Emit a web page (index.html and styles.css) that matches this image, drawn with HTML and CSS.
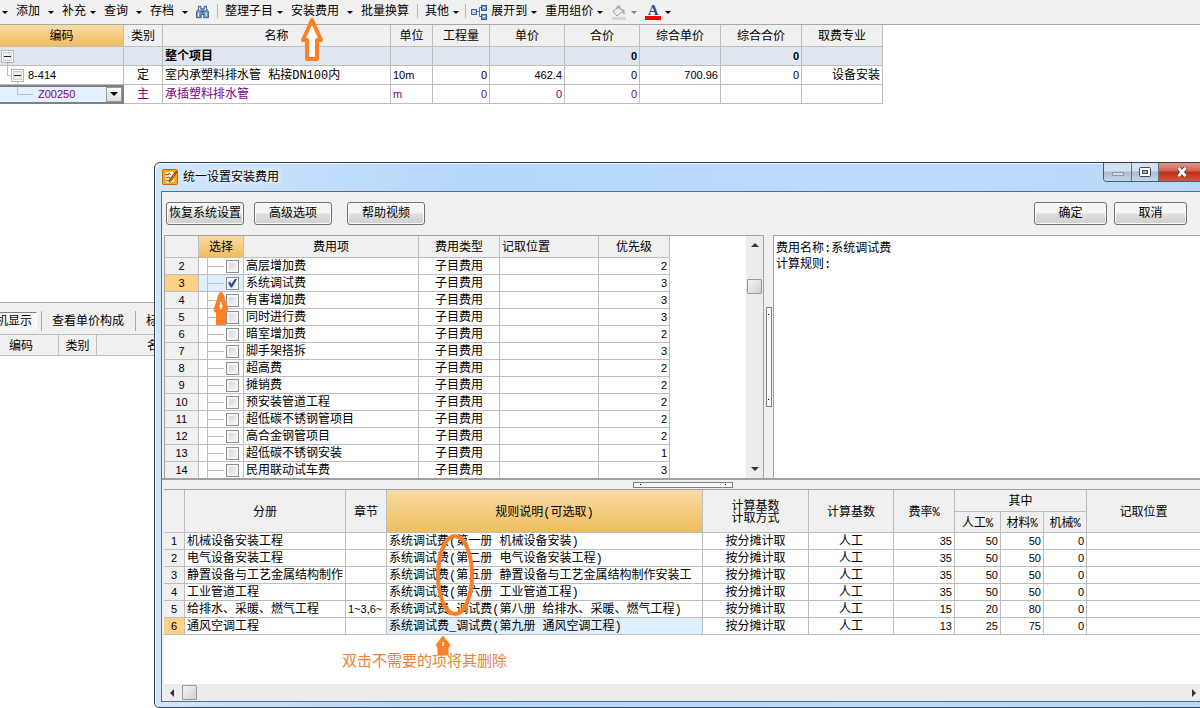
FILE: index.html
```html
<!DOCTYPE html>
<html lang="zh-CN">
<head>
<meta charset="utf-8">
<title>统一设置安装费用</title>
<link rel="stylesheet" href="styles.css">
</head>
<body>
<svg class="defs" aria-hidden="true">
  <symbol id="caret" viewBox="0 0 6 3"><path d="M0 0h6L3 3z"/></symbol>
  <symbol id="minus" viewBox="0 0 13 13"><rect x=".5" y=".5" width="12" height="12" fill="#fff" stroke="#b4b4b4"/><rect x="2.5" y="2.5" width="8" height="8" fill="#ececec" stroke="#d0d0d0"/><path d="M3 6.500h7" stroke="#222"/></symbol>
</svg>
<div class="app">
  <nav class="toolbar" aria-label="工具栏">
    <button class="tool" aria-label="更多"><svg class="caret"><use href="#caret"/></svg></button>
    <button class="tool split">添加<svg class="caret"><use href="#caret"/></svg></button>
    <button class="tool">补充<svg class="caret"><use href="#caret"/></svg></button>
    <button class="tool split">查询<svg class="caret"><use href="#caret"/></svg></button>
    <button class="tool split">存档<svg class="caret"><use href="#caret"/></svg></button>
    <button class="tool" aria-label="查找"><svg class="find" viewBox="0 0 16 16"><path d="M3 1h3v3h4V1h3v3l2.500 4v7h-6v-4h-3v4h-6V8L3 4z" fill="#6f93c6" stroke="#2b4c85"/><path d="M3 8.500v5M12.500 8.500v5M4.500 2.500v3M11.500 2.500v3" stroke="#e6f0fb" stroke-width="1.400"/><path d="M6 7.500h4" stroke="#1f3c70"/></svg></button>
    <span class="sep"></span>
    <button class="tool">整理子目<svg class="caret"><use href="#caret"/></svg></button>
    <button class="tool split">安装费用<svg class="caret"><use href="#caret"/></svg></button>
    <button class="tool">批量换算</button>
    <span class="sep"></span>
    <button class="tool">其他<svg class="caret"><use href="#caret"/></svg></button>
    <span class="sep tight"></span>
    <button class="tool"><svg class="icon" viewBox="0 0 16 16"><path d="M5 7.500h3.500M8.500 3.500v9M8.500 3.500H11M8.500 12.500H11" fill="none" stroke="#4a6fb0"/><rect x=".5" y="5.500" width="5" height="5" fill="#a9c6ee" stroke="#3c66ad"/><rect x="10.500" y="1.500" width="5" height="5" fill="#78a5e6" stroke="#2f5aa5"/><rect x="10.500" y="10.500" width="5" height="5" fill="#78a5e6" stroke="#2f5aa5"/><path d="M12 3.500h2M12 12.500h2M2 7.500h2" stroke="#fff"/></svg>展开到<svg class="caret"><use href="#caret"/></svg></button>
    <button class="tool">重用组价<svg class="caret"><use href="#caret"/></svg></button>
    <button class="tool disabled" aria-label="填充颜色"><svg class="icon" viewBox="0 0 16 16"><path d="M2 7l6-4 4 4-6 5z" fill="#eee" stroke="#9a9a9a"/><path d="M6 5V2.500a2 2 0 0 1 3 0V6" fill="none" stroke="#9a9a9a"/><path d="M11 5c3 0 3 3 2.500 6-1.500-1-2-3-2.500-4z" fill="#aaa"/><rect x="1" y="13" width="14" height="3" fill="#d6d6d6"/></svg><svg class="caret"><use href="#caret"/></svg></button>
    <button class="tool" aria-label="字体颜色"><span class="font-color">A</span><svg class="caret"><use href="#caret"/></svg></button>
  </nav>

  <main class="budget">
    <table class="grid main-grid">
      <colgroup><col class="w124"><col class="w39"><col class="w228"><col class="w42"><col class="w57"><col class="w75"><col class="w75"><col class="w81"><col class="w81"><col class="w81"></colgroup>
      <thead><tr><th class="hot">编码</th><th>类别</th><th>名称</th><th>单位</th><th>工程量</th><th>单价</th><th>合价</th><th>综合单价</th><th>综合合价</th><th>取费专业</th></tr></thead>
      <tbody>
        <tr class="total"><td class="tree"><svg class="tree-art" viewBox="0 0 34 18"><use href="#minus" x="1" y="3" width="13" height="13"/><path d="M7.500 16v2"/></svg></td><td></td><td>整个项目</td><td></td><td></td><td></td><td class="num">0</td><td></td><td class="num">0</td><td></td></tr>
        <tr><td class="tree"><svg class="tree-art" viewBox="0 0 34 18"><path d="M7.500 0v9.500H11M17.500 15v3"/><use href="#minus" x="11" y="3" width="13" height="13"/></svg><span class="code">8-414</span></td><td class="mid">定</td><td>室内承塑料排水管 粘接DN100内</td><td class="unit">10m</td><td class="num">0</td><td class="num">462.4</td><td class="num">0</td><td class="num">700.96</td><td class="num">0</td><td class="end">设备安装</td></tr>
        <tr class="purple"><td class="editing"><div class="combo"><svg class="tree-art" viewBox="0 0 34 15"><path d="M17.500 0v7.500H33"/></svg><select class="code-select" aria-label="编码"><option>Z00250</option></select><span class="drop"><svg class="caret big"><use href="#caret"/></svg></span></div></td><td class="mid">主</td><td>承插塑料排水管</td><td class="unit">m</td><td class="num">0</td><td class="num">0</td><td class="num">0</td><td></td><td></td><td></td></tr>
      </tbody>
    </table>
  </main>

  <section class="lower">
    <div class="tabs">
      <button class="tab pressed">机显示</button><span class="tab-sep"></span>
      <button class="tab">查看单价构成</button><span class="tab-sep"></span>
      <button class="tab">标</button>
    </div>
    <table class="grid lower-grid">
      <colgroup><col class="w59"><col class="w38"><col></colgroup>
      <thead><tr><th class="code-head">编码</th><th>类别</th><th class="name-head">名</th></tr></thead>
    </table>
  </section>
</div>

<section class="dialog" role="dialog" aria-labelledby="dlg-title">
  <header class="titlebar">
    <svg class="logo" viewBox="0 0 16 16"><rect x=".5" y=".5" width="15" height="15" rx="1" fill="#f5a81c" stroke="#c26a08"/><path d="M3 3.500l7-1 3 2-1 8-8 1.500z" fill="#fff4cf"/><path d="M3 5l3 1 1-2 2 2M4 9l3-1 2 3M4 12l4-1" fill="none" stroke="#a34d0c"/><path d="M14 2L8 10l-1 3 3-2 5-8z" fill="#e0691a" stroke="#7a3606" stroke-width=".8"/></svg>
    <h1 id="dlg-title">统一设置安装费用</h1>
    <div class="winbtns">
      <button class="win min" aria-label="最小化"><svg viewBox="0 0 14 12"><rect x="1.500" y="6.500" width="11" height="3" fill="#d5dde6" stroke="#8b98a8"/></svg></button>
      <button class="win max" aria-label="最大化"><svg viewBox="0 0 14 12"><rect x="1.500" y="1.500" width="11" height="9" rx="1" fill="#fff" stroke="#3f4a5a"/><rect x="4.500" y="4.500" width="5" height="3" fill="#9fb1c7" stroke="#3f4a5a"/></svg></button>
      <button class="win close" aria-label="关闭"><svg viewBox="0 0 14 12"><path d="M3.500 2l7 8M10.500 2l-7 8" stroke="#5a3a3a" stroke-width="4.500"/><path d="M3.500 2l7 8M10.500 2l-7 8" stroke="#fff" stroke-width="2.800"/></svg></button>
    </div>
  </header>
  <div class="client">
    <div class="actions">
      <button class="btn">恢复系统设置</button>
      <button class="btn">高级选项</button>
      <button class="btn help">帮助视频</button>
      <span class="grow"></span>
      <button class="btn small">确定</button>
      <button class="btn small">取消</button>
    </div>
    <div class="upper">
      <div class="fees">
        <div class="fees-view">
          <table class="grid fee-grid">
            <colgroup><col class="w34"><col class="w45"><col class="w175"><col class="w81"><col class="w99"><col class="w71"></colgroup>
            <thead><tr><th></th><th class="hot">选择</th><th>费用项</th><th>费用类型</th><th class="left">记取位置</th><th>优先级</th></tr></thead>
            <tbody>
              <tr><th>2</th><td class="pick"><input type="checkbox" id="f2"></td><td><label for="f2">高层增加费</label></td><td class="mid">子目费用</td><td></td><td class="num">2</td></tr>
              <tr class="on"><th>3</th><td class="pick"><input type="checkbox" id="f3" checked></td><td><label for="f3">系统调试费</label></td><td class="mid">子目费用</td><td></td><td class="num">3</td></tr>
              <tr><th>4</th><td class="pick"><input type="checkbox" id="f4"></td><td><label for="f4">有害增加费</label></td><td class="mid">子目费用</td><td></td><td class="num">3</td></tr>
              <tr><th>5</th><td class="pick"><input type="checkbox" id="f5"></td><td><label for="f5">同时进行费</label></td><td class="mid">子目费用</td><td></td><td class="num">3</td></tr>
              <tr><th>6</th><td class="pick"><input type="checkbox" id="f6"></td><td><label for="f6">暗室增加费</label></td><td class="mid">子目费用</td><td></td><td class="num">2</td></tr>
              <tr><th>7</th><td class="pick"><input type="checkbox" id="f7"></td><td><label for="f7">脚手架搭拆</label></td><td class="mid">子目费用</td><td></td><td class="num">3</td></tr>
              <tr><th>8</th><td class="pick"><input type="checkbox" id="f8"></td><td><label for="f8">超高费</label></td><td class="mid">子目费用</td><td></td><td class="num">2</td></tr>
              <tr><th>9</th><td class="pick"><input type="checkbox" id="f9"></td><td><label for="f9">摊销费</label></td><td class="mid">子目费用</td><td></td><td class="num">2</td></tr>
              <tr><th>10</th><td class="pick"><input type="checkbox" id="f10"></td><td><label for="f10">预安装管道工程</label></td><td class="mid">子目费用</td><td></td><td class="num">2</td></tr>
              <tr><th>11</th><td class="pick"><input type="checkbox" id="f11"></td><td><label for="f11">超低碳不锈钢管项目</label></td><td class="mid">子目费用</td><td></td><td class="num">2</td></tr>
              <tr><th>12</th><td class="pick"><input type="checkbox" id="f12"></td><td><label for="f12">高合金钢管项目</label></td><td class="mid">子目费用</td><td></td><td class="num">2</td></tr>
              <tr><th>13</th><td class="pick"><input type="checkbox" id="f13"></td><td><label for="f13">超低碳不锈钢安装</label></td><td class="mid">子目费用</td><td></td><td class="num">1</td></tr>
              <tr><th>14</th><td class="pick"><input type="checkbox" id="f14"></td><td><label for="f14">民用联动试车费</label></td><td class="mid">子目费用</td><td></td><td class="num">3</td></tr>
            </tbody>
          </table>
        </div>
        <div class="vscroll"><svg class="arrow" viewBox="0 0 8 8"><path d="M0 6h8L4 2z"/></svg><span class="thumb"></span><span class="grow"></span><svg class="arrow" viewBox="0 0 8 8"><path d="M0 2h8L4 6z"/></svg></div>
      </div>
      <div class="vsplit"><span class="handle"></span></div>
      <div class="info"><p>费用名称:系统调试费</p><p>计算规则:</p></div>
    </div>
    <div class="hsplit"><span class="handle"></span></div>
    <div class="rules">
      <table class="grid rule-grid">
        <colgroup><col class="w21"><col class="w161"><col class="w41"><col class="w316"><col class="w106"><col class="w85"><col class="w61"><col class="w46"><col class="w43"><col class="w43"><col></colgroup>
        <thead>
          <tr><th rowspan="2"></th><th rowspan="2">分册</th><th rowspan="2">章节</th><th rowspan="2" class="hot">规则说明(可选取)</th><th rowspan="2">计算基数<br>计取方式</th><th rowspan="2">计算基数</th><th rowspan="2">费率%</th><th colspan="3">其中</th><th rowspan="2">记取位置</th></tr>
          <tr><th>人工%</th><th>材料%</th><th>机械%</th></tr>
        </thead>
        <tbody>
          <tr><th>1</th><td>机械设备安装工程</td><td></td><td>系统调试费(第一册 机械设备安装)</td><td class="mid">按分摊计取</td><td class="mid">人工</td><td class="num">35</td><td class="num">50</td><td class="num">50</td><td class="num">0</td><td></td></tr>
          <tr><th>2</th><td>电气设备安装工程</td><td></td><td>系统调试费(第二册 电气设备安装工程)</td><td class="mid">按分摊计取</td><td class="mid">人工</td><td class="num">35</td><td class="num">50</td><td class="num">50</td><td class="num">0</td><td></td></tr>
          <tr><th>3</th><td>静置设备与工艺金属结构制作</td><td></td><td>系统调试费(第五册 静置设备与工艺金属结构制作安装工</td><td class="mid">按分摊计取</td><td class="mid">人工</td><td class="num">35</td><td class="num">50</td><td class="num">50</td><td class="num">0</td><td></td></tr>
          <tr><th>4</th><td>工业管道工程</td><td></td><td>系统调试费(第六册 工业管道工程)</td><td class="mid">按分摊计取</td><td class="mid">人工</td><td class="num">35</td><td class="num">50</td><td class="num">50</td><td class="num">0</td><td></td></tr>
          <tr><th>5</th><td>给排水、采暖、燃气工程</td><td class="chapter">1~3,6~</td><td>系统调试费_调试费(第八册 给排水、采暖、燃气工程)</td><td class="mid">按分摊计取</td><td class="mid">人工</td><td class="num">15</td><td class="num">20</td><td class="num">80</td><td class="num">0</td><td></td></tr>
          <tr class="on"><th>6</th><td>通风空调工程</td><td></td><td class="picked">系统调试费_调试费(第九册 通风空调工程)</td><td class="mid">按分摊计取</td><td class="mid">人工</td><td class="num">13</td><td class="num">25</td><td class="num">75</td><td class="num">0</td><td></td></tr>
        </tbody>
      </table>
      <span class="grow"></span>
      <div class="hscroll"><svg class="arrow" viewBox="0 0 8 8"><path d="M6 0v8L2 4z"/></svg><span class="thumb"></span><span class="grow"></span><svg class="arrow" viewBox="0 0 8 8"><path d="M2 0v8l4-4z"/></svg></div>
    </div>
  </div>
</section>

<svg class="mark mark-menu" viewBox="0 0 22 44"><path d="M11 2L2 22h4v19h10V22h4z" fill="#fff" stroke="#ff7f27" stroke-width="4" stroke-linejoin="round"/></svg>
<svg class="mark mark-check" viewBox="0 0 16 34"><path d="M8 0c2 0 3 3 4 7l3 9c1 3-1 4-2 5v12H3V21c-1-1-3-2-2-5l3-9c1-4 2-7 4-7z" fill="#ff7f27"/><path d="M8 10v7M6.500 14h3" stroke="#fff" stroke-width="1.500"/></svg>
<svg class="mark mark-oval" viewBox="0 0 40 84"><ellipse cx="20" cy="42" rx="17" ry="39" fill="none" stroke="#ff7f27" stroke-width="4"/></svg>
<svg class="mark mark-rule" viewBox="0 0 16 22"><path d="M8 1l7 9-2 3v7H3v-7l-2-3z" fill="#ff7f27" stroke="#ff7f27" stroke-linejoin="round"/><path d="M8 7v4" stroke="#fff" stroke-width="1.500"/></svg>
<p class="note">双击不需要的项将其删除</p>
</body>
</html>
```
FILE: styles.css
```css
* { box-sizing: border-box; }
body {
  margin: 0;
  position: relative;
  height: 100vh;
  min-height: 708px;
  overflow: hidden;
  background: #fff;
  color: #000;
  font: 12px/16px "Liberation Mono", "Noto Sans CJK SC", monospace;
}
button, select, input { font: inherit; color: inherit; margin: 0; padding: 0; }
h1, p { margin: 0; font-weight: normal; }
.defs { position: absolute; width: 0; height: 0; }
.grow { flex: 1; }

.app { display: flex; flex-direction: column; height: 100%; }

/* toolbar */
.toolbar {
  display: flex;
  align-items: center;
  gap: 8px;
  height: 25px;
  flex: none;
  padding: 0 0 2px 2px;
  background: #f0f0f0;
  border-bottom: 1px solid #a8a8a8;
}
.tool {
  display: flex;
  align-items: center;
  gap: 4px;
  padding-top: 2px;
  border: 0;
  background: none;
  white-space: nowrap;
}
.tool.split { gap: 8px; }
.caret { width: 6px; height: 3px; flex: none; }
.caret.big { width: 8px; height: 4px; }
.disabled .caret { fill: #808080; }
.icon { width: 16px; height: 16px; }
.find { width: 13px; height: 16px; }
.sep { width: 1px; height: 14px; margin-right: -1px; background: #b8b8b8; }
.sep.tight { margin: 0 -3px 0 -2px; }
.font-color {
  width: 16px;
  height: 16px;
  border-bottom: 4px solid #f00;
  color: #2f4f87;
  font: bold 15px/12px "Liberation Serif", serif;
}

/* shared grid */
.grid { border-collapse: separate; border-spacing: 0; table-layout: fixed; }
.grid th, .grid td {
  padding: 2px 2px 0;
  overflow: hidden;
  border-right: 1px solid #bdbdbd;
  border-bottom: 1px solid #bdbdbd;
  font-weight: normal;
  text-align: left;
  line-height: 14px;
  white-space: nowrap;
}
.grid th { background: #f0f0f0; text-align: center; }
.grid thead th { padding-top: 3px; }
.grid th.left { text-align: left; }
.grid th.hot { background: linear-gradient(#f9dba6, #efbe5c); }
.grid .mid { text-align: center; }
.grid .end { text-align: right; }
.grid .num, .grid tbody th, .grid .chapter, .grid .unit, .code {
  padding-top: 0;
  font-family: "Liberation Sans", sans-serif;
  font-size: 11px;
  line-height: 16px;
}
.grid .num { text-align: right; }
.grid .on th { background: #ffd185; }
.w21 { width: 21px; } .w34 { width: 34px; } .w38 { width: 38px; } .w39 { width: 39px; }
.w41 { width: 41px; } .w42 { width: 42px; } .w43 { width: 43px; } .w45 { width: 45px; }
.w46 { width: 46px; } .w57 { width: 57px; } .w59 { width: 59px; } .w61 { width: 61px; }
.w71 { width: 71px; } .w75 { width: 75px; } .w81 { width: 81px; } .w85 { width: 85px; }
.w99 { width: 99px; } .w106 { width: 106px; } .w124 { width: 124px; } .w161 { width: 161px; }
.w175 { width: 175px; } .w228 { width: 228px; } .w316 { width: 316px; }

/* budget table */
.budget { flex: none; height: 277px; }
.main-grid { width: 883px; }
.main-grid th { height: 22px; }
.main-grid td { height: 19px; }
.main-grid .total td { background: #dfe6f0; font-weight: bold; }
.main-grid .purple { color: #800080; }
.main-grid .tree { padding: 0; }
.tree-art { width: 34px; height: 18px; flex: none; fill: none; stroke: #bdbdbd; vertical-align: top; }
.main-grid .code { margin-left: -6px; line-height: 18px; }
.main-grid .editing { padding: 0; background: #808080; border-right-color: #808080; border-bottom-color: #808080; }
.combo { display: flex; height: 15px; margin: 1px 1px 1px 0; background: #e3f0fd; }
.combo .tree-art { height: 15px; }
.code-select {
  flex: 1;
  min-width: 0;
  padding-left: 4px;
  appearance: none;
  border: 0;
  border-radius: 0;
  background: none;
  font: 11px/15px "Liberation Sans", sans-serif;
}
.drop {
  display: flex;
  align-items: center;
  justify-content: center;
  width: 16px;
  border: 1px solid #999;
  background: linear-gradient(#fff, #ddd);
  pointer-events: none;
}

/* lower pane behind the dialog */
.lower { border-top: 1px solid #a8a8a8; background: #fff; }
.tabs { display: flex; align-items: center; height: 32px; padding-top: 5px; background: #f0f0f0; border-bottom: 1px solid #bdbdbd; }
.tab { border: 0; background: none; height: 18px; padding: 3px 11px 0 10px; line-height: 15px; white-space: nowrap; }
.tab.pressed { margin-left: -8px; padding: 2px 4px 0; border: solid #808080; border-width: 1px 0 0; border-right: 1px solid #fff; background: #f7f7f7; }
.tab-sep { width: 1px; height: 20px; background: #a8a8a8; }
.tab.pressed + .tab-sep { margin-left: 4px; }
.lower-grid { width: 100%; }
.lower-grid th { height: 21px; }
.lower-grid .code-head { padding-right: 18px; }
.lower-grid .name-head { text-align: left; padding-left: 50px; }

/* dialog window */
.dialog {
  position: absolute;
  left: 154px;
  top: 162px;
  right: -9px;
  bottom: 0;
  display: flex;
  flex-direction: column;
  padding: 0 6px 5px;
  border: 1px solid #33404f;
  border-radius: 6px 6px 5px 5px;
  background: linear-gradient(90deg, #cfe5fc, #b5d7fa 30%, #bcdcfd 70%, #b9d8f8);
  box-shadow: inset 1px 1px 0 #eef7ff;
}
.titlebar { display: flex; height: 28px; flex: none; }
.logo { width: 16px; height: 16px; margin: 6px 5px 0 1px; }
.titlebar h1 { padding-top: 2px; font-size: 12px; line-height: 26px; text-shadow: 0 0 6px #fff, 0 0 6px #fff; }
.winbtns { display: flex; margin-left: auto; margin-right: -4px; height: 19px; border: 1px solid #4d5a6b; border-top: 0; border-radius: 0 0 4px 4px; overflow: hidden; }
.win { display: flex; align-items: center; justify-content: center; width: 28px; border: 0; border-right: 1px solid #5f6e80; background: linear-gradient(#d4e1ee 45%, #a9bccf 50%, #c5d8ea); }
.win svg { width: 14px; height: 12px; }
.win.max { width: 27px; }
.win.close { width: 46px; border: 0; background: linear-gradient(#dd9a8c, #cf5f4c 45%, #ba2c17 50%, #cf5a3c); }
.client {
  flex: 1;
  display: flex;
  flex-direction: column;
  min-height: 0;
  border: 1px solid #5c6b7c;
  background: #f0f0f0;
}
.actions { display: flex; align-items: center; gap: 10px; height: 43px; flex: none; padding: 0 14px 0 4px; }
.btn {
  width: 78px;
  height: 23px;
  padding-top: 2px;
  border: 1px solid #707070;
  border-radius: 3px;
  background: linear-gradient(#f4f4f4 48%, #dedede 52%, #d0d0d0);
  box-shadow: inset 0 0 0 1px #fafafa;
  white-space: nowrap;
  line-height: 19px;
}
.btn.help { margin-left: 5px; }
.btn.small { width: 73px; }
.btn.small + .btn.small { margin-left: -3px; }

.upper { display: flex; height: 245px; flex: none; border-bottom: 2px solid #a0a0a0; }
.fees { display: flex; width: 600px; flex: none; margin-left: 2px; background: #fff; border: solid #a0a0a0; border-width: 1px 1px 0; }
.fees-view { flex: 1; overflow: hidden; }
.fee-grid { width: 505px; }
.fee-grid thead th { height: 22px; }
.fee-grid tbody th, .fee-grid td { height: 17px; }
.fee-grid .pick {
  padding: 0 4px 0 25px;
  background: linear-gradient(#bdbdbd, #bdbdbd) 8px 0 / 1px 100% no-repeat, linear-gradient(#bdbdbd, #bdbdbd) 8px 8px / 17px 1px no-repeat, #fff;
}
.fee-grid .on .pick { background-color: #e0effd; }
.pick input {
  display: block;
  width: 13px;
  height: 13px;
  margin-left: 2px;
  appearance: none;
  border: 1px solid #8e8f8f;
  background: linear-gradient(135deg, #cdd2d8, #f8f8f8);
  box-shadow: inset 0 0 0 2px #f4f4f4;
}
.pick input:checked::after {
  content: "";
  display: block;
  width: 9px;
  height: 9px;
  margin: 1px;
  background: #2c4a8c;
  clip-path: polygon(0 45%, 22% 38%, 38% 62%, 80% 0, 100% 8%, 45% 100%, 30% 100%);
}
.vscroll { display: flex; flex-direction: column; align-items: center; width: 17px; padding: 5px 0; background: #ececec; }
.arrow { width: 8px; height: 8px; fill: #333; }
.thumb { width: 15px; height: 15px; border: 1px solid #979797; border-radius: 1px; background: linear-gradient(135deg, #f6f6f6, #cfcfcf); }
.vscroll .thumb { margin-top: 30px; }
.vsplit { display: flex; justify-content: center; width: 9px; padding-top: 72px; }
.handle { display: flex; border: 1px solid #808080; background: #f8f8f8; }
.vsplit .handle { flex-direction: column; justify-content: space-between; align-items: center; width: 6px; height: 100px; padding: 6px 0; }
.handle::before, .handle::after { content: ""; width: 1px; height: 1px; background: #000; }
.info { flex: 1; padding: 5px 2px 0; background: #fff; border: solid #a0a0a0; border-width: 1px 0 0 1px; }
.hsplit { display: flex; align-items: center; height: 9px; flex: none; padding-left: 471px; }
.hsplit .handle { justify-content: space-between; align-items: center; width: 100px; height: 6px; padding: 0 6px; }
.rules { flex: 1; display: flex; flex-direction: column; min-height: 0; margin-left: 2px; background: #fff; border-top: 1px solid #a0a0a0; }
.rule-grid { width: 100%; }
.rule-grid thead th { height: 21px; line-height: 12px; }
.rule-grid thead tr:first-child th { height: 22px; }
.rule-grid tbody th, .rule-grid td { height: 17px; }
.rule-grid .picked { background: #e0effd; }
.hscroll { display: flex; align-items: center; height: 17px; flex: none; padding: 0 3px 0 4px; background: #ececec; }
.hscroll .thumb { margin-left: 6px; }

/* annotations over the windows */
.mark { position: absolute; pointer-events: none; }
.mark-menu { left: 301px; top: 18px; width: 22px; height: 44px; }
.mark-check { left: 213px; top: 292px; width: 16px; height: 34px; }
.mark-oval { left: 435px; top: 533px; width: 40px; height: 84px; }
.mark-rule { left: 435px; top: 635px; width: 16px; height: 22px; }
.note { position: absolute; left: 342px; top: 652px; color: #f08038; font-size: 15px; line-height: 22px; }
```
